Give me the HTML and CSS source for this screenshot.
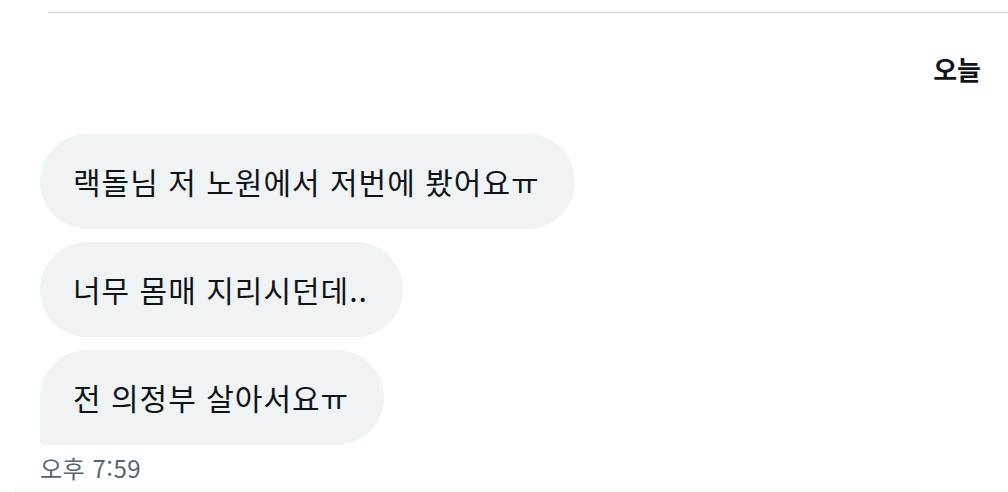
FILE: index.html
```html
<!DOCTYPE html>
<html lang="ko">
<head>
    <meta charset="UTF-8">
    <meta name="viewport" content="width=device-width, initial-scale=1.0">
    <title>메시지</title>
    <link rel="stylesheet" href="styles.css">
</head>
<body>
    <div class="conversation">
        <div class="divider"></div>

        <!-- 날짜 구분 -->
        <div class="day">오늘</div>

        <div class="group">
            <div class="bubble">랙돌님 저 노원에서 저번에 봤어요ㅠ</div>
            <div class="bubble">너무 몸매 지리시던데..</div>
            <div class="bubble last">전 의정부 살아서요ㅠ</div>
        </div>

        <div class="time">오후 7:59</div>

        <div class="composer-shade"></div>
    </div>
</body>
</html>
```

FILE: styles.css
```css
body {
    margin: 0;
    background-color: #ffffff;
    font-family: "Noto Sans CJK KR", "Noto Sans", sans-serif;
    color: #0f1419;
}

.conversation {
    height: 492px;
    overflow: hidden;
    display: flex;
    flex-direction: column;
}

.divider {
    height: 2px;
    margin: 12px 0 0 48px;
    background-color: #d0d3d5;
}

.day {
    text-align: right;
    font-size: 26px;
    font-weight: 700;
    line-height: 32px;
    margin: 40px 27px 0 0;
}

.group {
    display: flex;
    flex-direction: column;
    align-items: flex-start;
    gap: 13px;
    margin: 49px 0 0 40px;
}

.bubble {
    background-color: #eff3f4;
    font-size: 30px;
    letter-spacing: 1px;
    line-height: 47px;
    padding: 24px 35px 24px 33px;
    border-radius: 48px;
}

.bubble.last {
    border-bottom-left-radius: 4px;
}

.time {
    margin: 8px 0 0 40px;
    font-size: 24px;
    letter-spacing: 0.5px;
    line-height: 30px;
    color: #536471;
}

.composer-shade {
    height: 9px;
    margin: 3px 88px 0 14px;
    background: linear-gradient(#ffffff, #f7f7f7);
}
```
